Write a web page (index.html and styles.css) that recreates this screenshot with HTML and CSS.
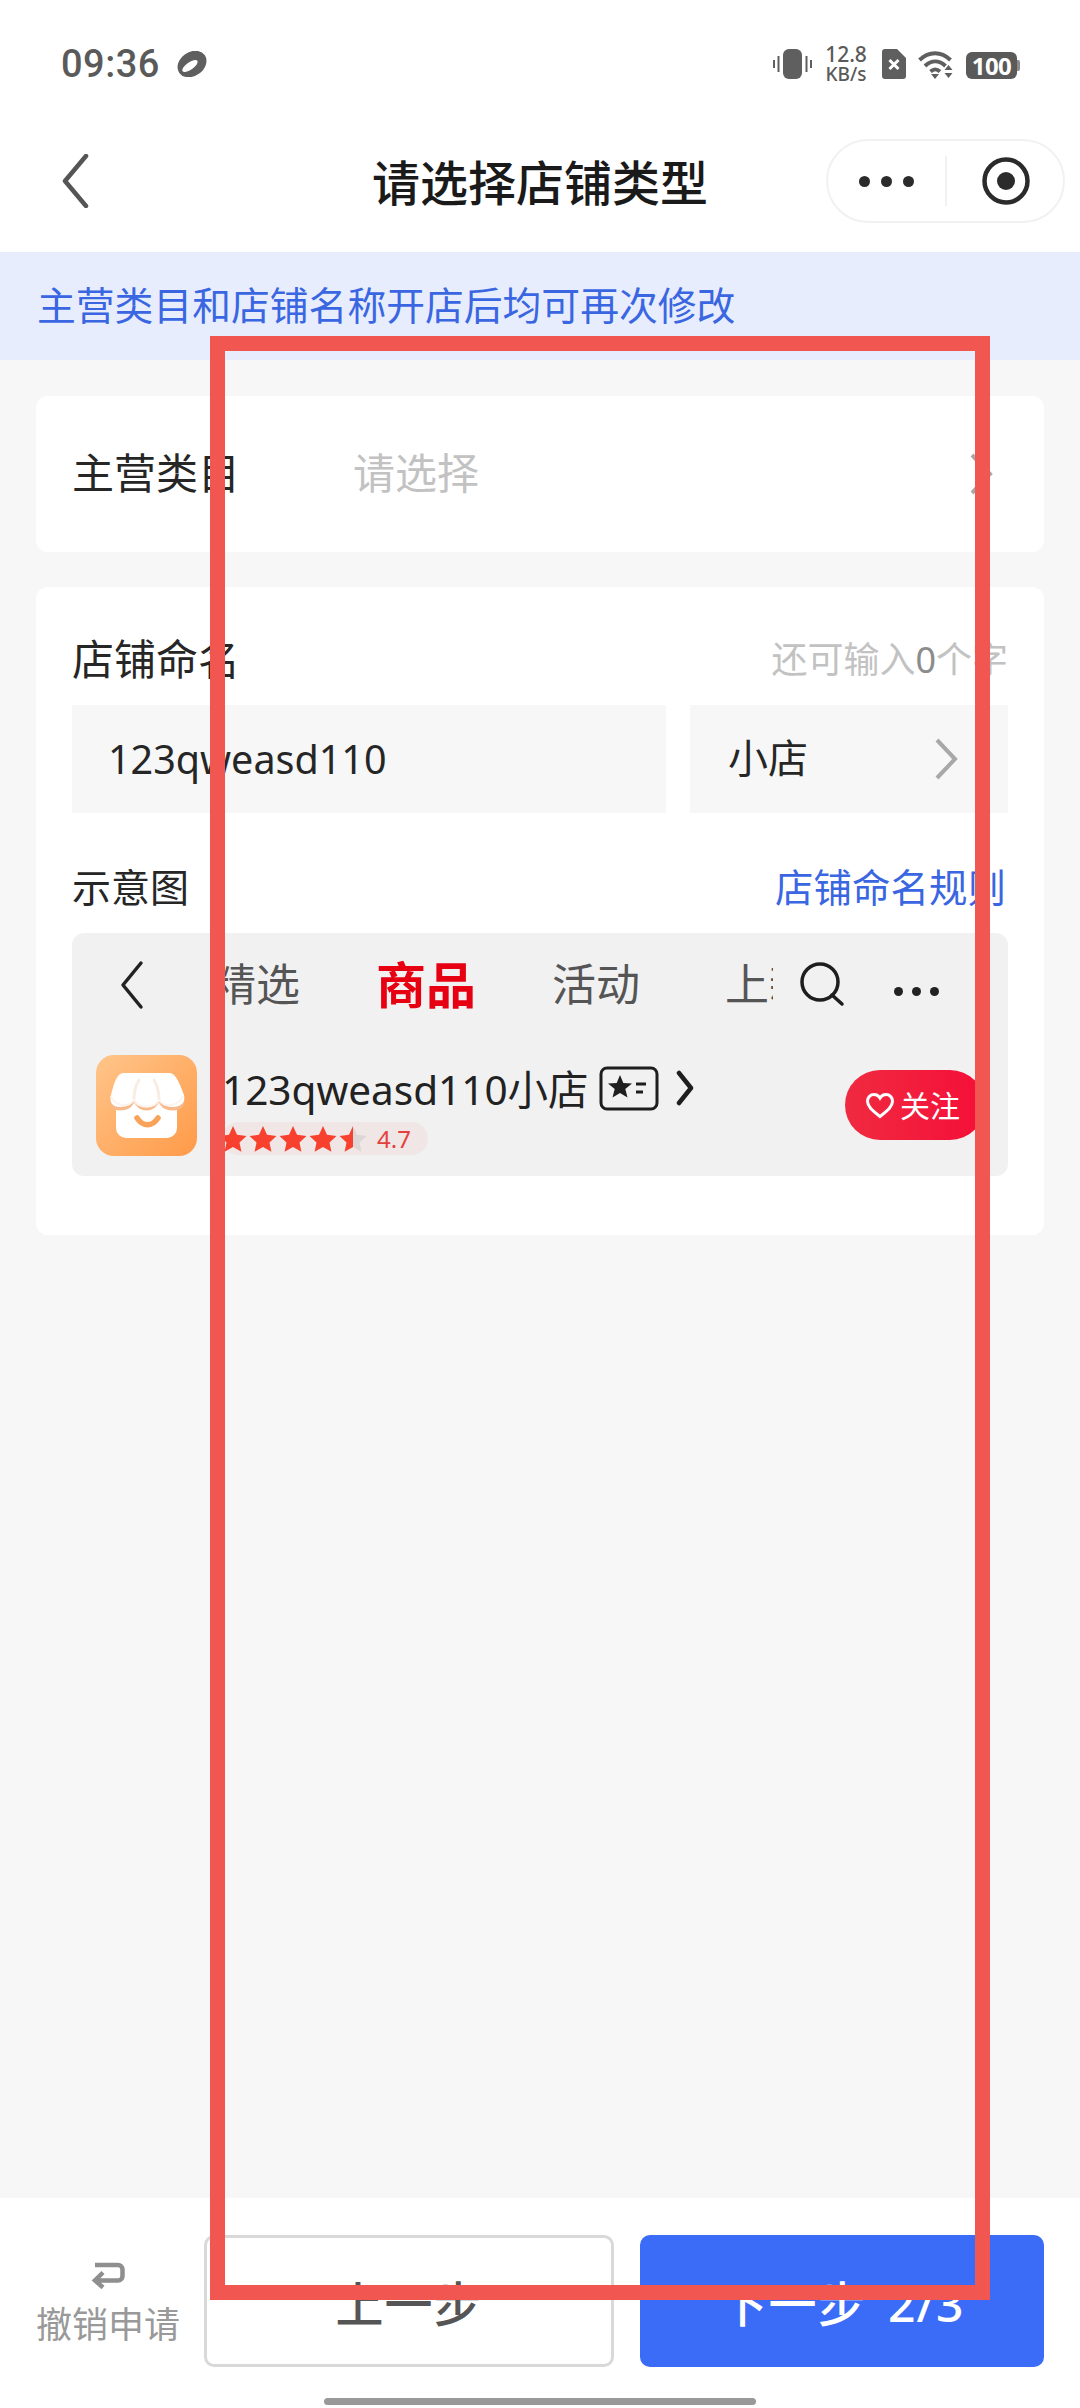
FILE: index.html
```html
<!DOCTYPE html>
<html lang="zh-CN">
<head>
<meta charset="utf-8">
<title>请选择店铺类型</title>
<link rel="stylesheet" href="styles.css">
</head>
<body>
<div class="page">
  <header class="status">
    <div class="status-left">
      <span class="time">09:36</span>
      <svg class="ball" width="30" height="26" viewBox="0 0 30 26"><ellipse cx="15" cy="13" rx="15.500" ry="12" transform="rotate(-35 15 13)" fill="#5f5f5f"/><ellipse cx="13" cy="15" rx="9" ry="3.600" transform="rotate(-35 13 15)" fill="#fff"/></svg>
    </div>
    <div class="status-right">
      <svg class="vib" width="39" height="30" viewBox="0 0 39 30"><rect x="10" y="0" width="19" height="30" rx="6" fill="#5f5f5f"/><path d="M1 11v8M5.500 7v16M33.500 7v16M38 11v8" stroke="#5f5f5f" stroke-width="2"/></svg>
      <div class="speed"><span class="speed-num">12.8</span><span class="speed-unit">KB/s</span></div>
      <svg class="sim" width="24" height="30" viewBox="0 0 24 30"><path d="M3 0h12l9 9v18a3 3 0 0 1-3 3H3a3 3 0 0 1-3-3V3a3 3 0 0 1 3-3z" fill="#5f5f5f"/><path d="M7.500 11l9 9M16.500 11l-9 9" stroke="#fff" stroke-width="3"/></svg>
      <svg class="wifi" width="38" height="29" viewBox="0 0 38 29"><path d="M1.500 10C11 1 23 1 32.500 10M7 16c6.500-6 14-6 20.500 0M12.500 21.500c3.500-3 6-3 9.500 0" fill="none" stroke="#5f5f5f" stroke-width="4"/><path d="M13 24h8l-4 5zM30.500 15l4 5h-8zM26.500 23h8l-4 5z" fill="#5f5f5f"/></svg>
      <div class="battery"><span class="battery-body">100</span><span class="battery-tip"></span></div>
    </div>
  </header>

  <nav class="nav">
    <svg class="nav-back" width="28" height="54" viewBox="0 0 28 54"><path d="M25 2 L4 27 L25 52" fill="none" stroke="#555" stroke-width="4.500" stroke-linecap="round" stroke-linejoin="round"/></svg>
    <h1 class="nav-title">请选择店铺类型</h1>
    <div class="capsule">
      <div class="capsule-dots"><i></i><i></i><i></i></div>
      <span class="capsule-line"></span>
      <svg class="capsule-rec" width="50" height="50" viewBox="0 0 50 50"><circle cx="25" cy="25" r="21.500" fill="none" stroke="#2b2b2b" stroke-width="4.500"/><circle cx="25" cy="25" r="9" fill="#2b2b2b"/></svg>
    </div>
  </nav>

  <div class="notice">主营类目和店铺名称开店后均可再次修改</div>

  <main class="main">
    <section class="card card-cat">
      <span class="label">主营类目</span>
      <span class="placeholder">请选择</span>
      <svg class="cat-arrow" width="24" height="42" viewBox="0 0 24 42"><path d="M3 2 L21 21 L3 40" fill="none" stroke="#a8a8a8" stroke-width="4"/></svg>
    </section>

    <section class="card card-name">
      <div class="row-between">
        <span class="label label-up">店铺命名</span>
        <span class="counter">还可输入<b class="counter-num">0</b>个字</span>
      </div>
      <div class="inputs">
        <div class="input-box">123qweasd110</div>
        <div class="suffix-box">
          <span class="suffix-text">小店</span>
          <svg width="24" height="42" viewBox="0 0 24 42"><path d="M3 2 L21 21 L3 40" fill="none" stroke="#a8a8a8" stroke-width="4"/></svg>
        </div>
      </div>
      <div class="row-between row-sample">
        <span class="sample-title">示意图</span>
        <span class="rule-link">店铺命名规则</span>
      </div>

      <div class="preview">
        <div class="pv-tabs-row">
          <svg class="pv-back" width="24" height="50" viewBox="0 0 24 50"><path d="M21 3 L3 25 L21 47" fill="none" stroke="#222" stroke-width="3.500" stroke-linecap="round" stroke-linejoin="round"/></svg>
          <div class="pv-tabs">
            <span>精选</span>
            <span class="pv-active">商品</span>
            <span>活动</span>
            <span class="pv-last">上新</span>
          </div>
          <svg class="pv-search" width="46" height="46" viewBox="0 0 46 46"><circle cx="21" cy="20" r="18" fill="none" stroke="#1e1e1e" stroke-width="3.500"/><path d="M33 33 L43 42" stroke="#1e1e1e" stroke-width="3.500" stroke-linecap="round"/></svg>
          <div class="pv-dots"><i></i><i></i><i></i></div>
        </div>
        <div class="pv-shop-row">
          <svg class="pv-logo" width="101" height="101" viewBox="0 0 101 101">
            <defs>
              <linearGradient id="logoBg" x1="0" y1="0" x2="1" y2="1"><stop offset="0" stop-color="#ffc58a"/><stop offset="1" stop-color="#ff9a48"/></linearGradient>
              <path id="awning" d="M28 18H73C79 18 82 24 88 40C90 48 84 52 77 52C70 52 65 49 63 44C60 49 56 52 50.500 52C45 52 41 49 38 44C36 49 31 52 24 52C17 52 13 48 15 40C19 24 22 18 28 18Z"/>
            </defs>
            <rect width="101" height="101" rx="18" fill="url(#logoBg)"/>
            <path d="M20 44H81V73A10 10 0 0 1 71 83H30A10 10 0 0 1 20 73Z" fill="#fff"/>
            <use href="#awning" y="3.500" fill="#f8b98a"/>
            <use href="#awning" fill="#fff"/>
            <path d="M38 44C38 37 40 30 43 25M63 44C63 37 61 30 58 25" fill="none" stroke="#f9ece3" stroke-width="3" stroke-linecap="round"/>
            <path d="M15 41C17 49 31 55 38 45C43 54 58 54 63 45C70 55 84 49 87 41" fill="none" stroke="#fbf3ee" stroke-width="2"/>
            <path d="M41 63C47 72 56 72 62 63" fill="none" stroke="#f9a35a" stroke-width="5.500" stroke-linecap="round"/>
          </svg>
          <div class="pv-info">
            <div class="pv-name">
              <span>123qweasd110小店</span>
              <svg class="pv-card" width="60" height="45" viewBox="0 0 60 45"><rect x="2" y="2" width="56" height="41" rx="6" fill="none" stroke="#1e1e1e" stroke-width="3"/><path d="M21 9l3.300 8 8.700.6-6.700 5.500 2.200 8.400-7.500-4.600-7.500 4.600 2.200-8.400-6.700-5.500 8.700-.6z" fill="#1e1e1e"/><path d="M37 18h10M37 26h7" stroke="#1e1e1e" stroke-width="3"/></svg>
              <svg class="pv-more" width="18" height="36" viewBox="0 0 18 36"><path d="M3 3 L15 18 L3 33" fill="none" stroke="#1e1e1e" stroke-width="4.500" stroke-linecap="round" stroke-linejoin="round"/></svg>
            </div>
            <div class="pv-rating">
              <svg class="pv-stars" width="152" height="30" viewBox="0 0 152 30">
                <defs>
                  <linearGradient id="halfStar" x1="0" y1="0" x2="1" y2="0"><stop offset=".5" stop-color="#f8402f"/><stop offset=".5" stop-color="#dcd6d6"/></linearGradient>
                  <path id="star" d="M15 2l4 8.800 9.500 1.100-7 6.500 1.900 9.400L15 23.100 6.600 27.800l1.900-9.400-7-6.500L11 10.800z"/>
                </defs>
                <use href="#star" x="0" fill="#f8402f"/>
                <use href="#star" x="30" fill="#f8402f"/>
                <use href="#star" x="60" fill="#f8402f"/>
                <use href="#star" x="90" fill="#f8402f"/>
                <use href="#star" x="120" fill="url(#halfStar)"/>
              </svg>
              <span class="pv-score">4.7</span>
            </div>
          </div>
          <div class="pv-follow">
            <svg width="30" height="27" viewBox="0 0 30 27"><path d="M15 24.500C7 18.500 2.500 14.500 2.500 9.300 2.500 5.300 5.500 2.500 9 2.500c2.500 0 4.700 1.300 6 3.500 1.300-2.200 3.500-3.500 6-3.500 3.500 0 6.500 2.800 6.500 6.800 0 5.200-4.500 9.200-12.500 15.200z" fill="none" stroke="#fff" stroke-width="3"/></svg>
            <span>关注</span>
          </div>
        </div>
      </div>
    </section>
  </main>

  <footer class="footer">
    <div class="footer-row">
      <div class="revoke">
        <svg width="34" height="27" viewBox="0 0 34 27"><path d="M4 3H27a4.500 4.500 0 0 1 4.500 4.500V14a4.500 4.500 0 0 1-4.500 4.500H5M12 10.500l-8 8 8 7" fill="none" stroke="#8f8f8f" stroke-width="4.500"/></svg>
        <span>撤销申请</span>
      </div>
      <button class="btn btn-prev" type="button">上一步</button>
      <button class="btn btn-next" type="button">下一步 2/3</button>
    </div>
    <div class="home-bar"></div>
  </footer>

  <div class="red-frame"></div>
</div>
</body>
</html>
```

FILE: styles.css
```css
* { box-sizing: border-box; }
html, body { margin: 0; padding: 0; }
body {
  font-family: "Noto Sans", "Noto Sans CJK SC", sans-serif;
  color: #262626;
}
.page {
  position: relative;
  width: 1080px;
  height: 2408px;
  display: flex;
  flex-direction: column;
  background: #f7f7f7;
  overflow: hidden;
}

/* status bar */
.status {
  height: 110px;
  background: #fff;
  display: flex;
  justify-content: space-between;
  align-items: flex-start;
  padding: 44px 60px 0 61px;
  color: #5a5a5a;
}
.status-left { display: flex; align-items: center; gap: 17px; height: 40px; }
.time { font: 500 38px/40px Roboto, sans-serif; letter-spacing: .5px; }
.status-right { display: flex; align-items: flex-start; margin-top: 3px; }
.vib { margin-right: 11px; margin-top: 2px; }
.speed { display: flex; flex-direction: column; width: 46px; margin-right: 13px; margin-top: -3px; font-family: "Noto Sans", sans-serif; font-weight: 500; align-items: center; white-space: nowrap; }
.speed-num { font-size: 21px; line-height: 20px; }
.speed-unit { font-size: 19px; line-height: 20px; }
.sim { margin-right: 12px; margin-top: 2px; }
.wifi { margin-right: 10px; margin-top: 3px; }
.battery { display: flex; align-items: center; margin-top: 5px; }
.battery-body { width: 51px; height: 27px; background: #5a5a5a; color: #fff; border-radius: 6px; font: 700 24px/27px "Noto Sans", sans-serif; text-align: center; letter-spacing: -.5px; }
.battery-tip { width: 3px; height: 11px; background: #8a8a8a; border-radius: 0 2px 2px 0; }

/* nav */
.nav {
  height: 142px;
  background: #fff;
  position: relative;
  display: flex;
  align-items: center;
  justify-content: space-between;
  padding: 0 15px 0 61px;
}
.nav-title {
  position: absolute;
  left: 0;
  right: 0;
  margin: -3px 0 0;
  text-align: center;
  font-family: "Noto Sans CJK SC", sans-serif;
  font-size: 48px;
  font-weight: 500;
  color: #1a1a1a;
  line-height: 60px;
}
.capsule {
  position: relative;
  width: 239px;
  height: 84px;
  border: 2px solid #f1f1f1;
  border-radius: 42px;
  display: flex;
  align-items: center;
  padding-left: 31px;
  background: #fff;
}
.capsule-dots { display: flex; gap: 11px; width: 56px; }
.capsule-dots i { width: 11px; height: 11px; border-radius: 50%; background: #2b2b2b; }
.capsule-line { width: 2px; height: 50px; background: #f1f1f1; margin-left: 30px; }
.capsule-rec { margin-left: 34px; }

/* notice */
.notice {
  height: 108px;
  background: #e7edfd;
  padding: 0 0 6px 37px;
  display: flex;
  align-items: center;
  font-family: "Noto Sans CJK SC", sans-serif;
  font-size: 38.800px;
  color: #3a66e2;
}

/* main */
.main {
  flex: 1;
  padding: 36px 36px 0;
  display: flex;
  flex-direction: column;
  gap: 35px;
}
.card { background: #fff; border-radius: 12px; }
.label { font-family: "Noto Sans CJK SC", sans-serif; font-size: 42px; color: #262626; line-height: 56px; }
.label-up { margin-bottom: 6px; }
.card-cat {
  height: 156px;
  display: flex;
  align-items: center;
  padding: 0 36px 7px 36px;
}
.placeholder { font-family: "Noto Sans CJK SC", sans-serif; font-size: 42px; color: #c2c2c2; margin-left: 113px; }
.cat-arrow { margin-left: auto; margin-right: 15px; margin-top: 7px; }
.card-name { padding: 45px 36px 59px; }
.row-between { display: flex; justify-content: space-between; align-items: center; height: 56px; }
.counter { font-family: "Noto Sans CJK SC", sans-serif; font-size: 36px; color: #c2c2c2; margin-bottom: 6px; }
.counter-num { font-family: "Noto Sans", sans-serif; font-weight: 400; color: #8c8c8c; }
.inputs { display: flex; gap: 24px; margin-top: 17px; }
.input-box {
  flex: 1;
  height: 108px;
  background: #f7f7f7;
  padding-left: 36px;
  display: flex;
  align-items: center;
  font-size: 39.500px;
  color: #262626;
}
.suffix-box {
  width: 318px;
  height: 108px;
  background: #f7f7f7;
  padding: 0 50px 0 38px;
  display: flex;
  align-items: center;
  justify-content: space-between;
  font-family: "Noto Sans CJK SC", sans-serif;
  font-size: 40px;
}
.suffix-text { margin-bottom: 6px; }
.row-sample { margin-top: 48px; }
.sample-title { font-family: "Noto Sans CJK SC", sans-serif; font-size: 39px; color: #262626; margin-bottom: 8px; }
.rule-link { font-family: "Noto Sans CJK SC", sans-serif; font-size: 38.500px; color: #3a66e2; margin-right: 2px; margin-bottom: 8px; }

/* preview */
.preview {
  margin-top: 16px;
  height: 243px;
  background: #f1f1f2;
  border-radius: 12px;
  padding-bottom: 21px;
  display: flex;
  flex-direction: column;
}
.pv-tabs-row { height: 104px; display: flex; align-items: center; padding-left: 48px; flex: none; margin-bottom: 18px; }
.pv-back { flex: none; margin-right: 56px; }
.pv-tabs {
  width: 573px;
  height: 70px;
  overflow: hidden;
  display: flex;
  align-items: center;
  gap: 76px;
  padding: 0 0 6px 12px;
  font-family: "Noto Sans CJK SC", sans-serif;
  font-size: 44px;
  color: #555;
  white-space: nowrap;
  flex: none;
}
.pv-tabs span { flex: none; }
.pv-tabs .pv-active { font-size: 50px; font-weight: 700; color: #e60012; }
.pv-tabs .pv-last { margin-left: 9px; }
.pv-search { flex: none; margin-left: 26px; }
.pv-dots { display: flex; gap: 9px; margin-left: 49px; margin-top: 12px; }
.pv-dots i { width: 9px; height: 9px; border-radius: 50%; background: #222; }
.pv-shop-row { display: flex; align-items: center; padding: 0 23px 0 24px; height: 100px; }
.pv-logo { flex: none; }
.pv-info { margin-left: 25px; display: flex; flex-direction: column; height: 100px; }
.pv-name { height: 67px; display: flex; align-items: center; font-size: 40.500px; color: #222; white-space: nowrap; font-family: "Noto Sans", "Noto Sans CJK SC", sans-serif; padding-bottom: 2px; }
.pv-card { margin-left: 10px; margin-top: 2px; }
.pv-more { margin-left: 17px; }
.pv-rating { width: 206px; height: 33px; border-radius: 17px; background: #f0e6e6; display: flex; align-items: center; }
.pv-stars { flex: none; margin-left: -4px; }
.pv-score { font-size: 24px; color: #e4413e; margin-left: 7px; line-height: 33px; }
.pv-follow {
  margin-left: auto;
  width: 140px;
  height: 70px;
  border-radius: 35px;
  background: linear-gradient(90deg, #f02a40, #f50f38);
  display: flex;
  align-items: center;
  padding-left: 20px;
  gap: 5px;
  color: #fff;
  font-family: "Noto Sans CJK SC", sans-serif;
  font-size: 30px;
}
.pv-follow span { margin-bottom: 3px; }

/* footer */
.footer { height: 210px; background: #fff; padding-top: 37px; flex: none; }
.footer-row { display: flex; padding: 0 36px; height: 132px; }
.revoke {
  width: 168px;
  flex: none;
  display: flex;
  flex-direction: column;
  align-items: flex-start;
  font-family: "Noto Sans CJK SC", sans-serif;
  font-size: 36px;
  color: #999;
  padding-top: 27px;
}
.revoke svg { margin-left: 55px; margin-bottom: 11px; }
.revoke span { line-height: 44px; }
.btn {
  height: 132px;
  border-radius: 10px;
  font-family: "Noto Sans", "Noto Sans CJK SC", sans-serif;
  font-size: 48px;
  font-weight: 500;
  padding: 0;
  margin: 0;
}
.btn-prev { width: 410px; background: #fff; border: 3px solid #d9d9d9; color: #555; flex: none; margin-right: 26px; letter-spacing: 1px; }
.btn-next { flex: 1; background: #3a6cf8; border: 0; color: #fff; word-spacing: 8px; letter-spacing: 1px; }
.home-bar { width: 432px; height: 7px; background: #999; border-radius: 4px; margin: 31px auto 0; }

/* annotation rectangle on top of the screenshot */
.red-frame {
  position: absolute;
  left: 210px;
  top: 336px;
  width: 780px;
  height: 1964px;
  border: 15px solid #f25650;
  pointer-events: none;
}
```
